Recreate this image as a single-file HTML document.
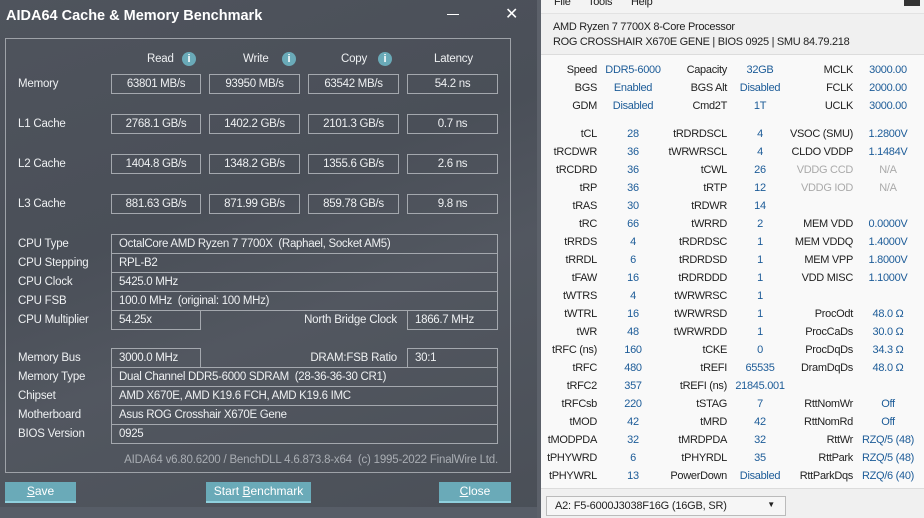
<!DOCTYPE html>
<html><head><meta charset="utf-8"><style>
*{margin:0;padding:0;box-sizing:border-box}
body{width:924px;height:518px;overflow:hidden;position:relative;font-family:"Liberation Sans",sans-serif;background:#4b5059}
.a{position:absolute;white-space:nowrap}
#L{position:absolute;left:0;top:0;width:537px;height:518px;background:linear-gradient(160deg,#4f545d 0%,#4a4f58 40%,#525760 60%,#4a4f57 100%)}
.t{position:absolute;font-size:11.5px;letter-spacing:-0.2px;color:#eef0f2;white-space:nowrap}
.box{position:absolute;border:1px solid #a4a8ae;height:20px;font-size:11.5px;letter-spacing:-0.3px;color:#eef0f2;line-height:18px;white-space:nowrap;overflow:hidden}
.c{text-align:center}
.l{padding-left:7px}
.btn{position:absolute;top:482px;height:21px;background:#6aaab8;border-bottom:2px solid #8fd0de;color:#fff;font-size:12px;text-align:center;line-height:19px;white-space:nowrap}
.ii{position:absolute;width:14px;height:14px;border-radius:50%;background:#6aaab8;color:#fff;font-size:11px;font-weight:bold;text-align:center;line-height:14px}
#R{position:absolute;left:537px;top:0;width:387px;height:518px;background:#f9f9f9;border-left:4px solid #5c616a}
.r{position:absolute;font-size:11px;letter-spacing:-0.3px;color:#222;line-height:14px;white-space:nowrap}
.lb{text-align:right;width:80px}
.v{color:#1d5c98;text-align:center}
.g{color:#aaa}
</style></head><body>
<div id="L">
<div class="a" style="left:6px;top:8px;font-size:14.5px;font-weight:bold;color:#fff">AIDA64 Cache &amp; Memory Benchmark</div>
<div class="a" style="left:447px;top:14px;width:12px;height:1px;background:#fff"></div>
<div class="a" style="left:505px;top:4px;font-size:16px;color:#fff">✕</div>
<div class="a" style="left:5px;top:38px;width:506px;height:435px;border:1px solid #9ea2a8"></div>
<div class="t" style="left:147px;top:53px">Read</div><div class="ii" style="left:182px;top:52px">i</div>
<div class="t" style="left:243px;top:53px">Write</div><div class="ii" style="left:282px;top:52px">i</div>
<div class="t" style="left:341px;top:53px">Copy</div><div class="ii" style="left:378px;top:52px">i</div>
<div class="t" style="left:434px;top:53px">Latency</div>

<div class="t" style="left:18px;top:78px">Memory</div>
<div class="box c" style="left:111px;top:74px;width:90px">63801 MB/s</div>
<div class="box c" style="left:209px;top:74px;width:91px">93950 MB/s</div>
<div class="box c" style="left:308px;top:74px;width:91px">63542 MB/s</div>
<div class="box c" style="left:407px;top:74px;width:91px">54.2 ns</div>
<div class="t" style="left:18px;top:118px">L1 Cache</div>
<div class="box c" style="left:111px;top:114px;width:90px">2768.1 GB/s</div>
<div class="box c" style="left:209px;top:114px;width:91px">1402.2 GB/s</div>
<div class="box c" style="left:308px;top:114px;width:91px">2101.3 GB/s</div>
<div class="box c" style="left:407px;top:114px;width:91px">0.7 ns</div>
<div class="t" style="left:18px;top:158px">L2 Cache</div>
<div class="box c" style="left:111px;top:154px;width:90px">1404.8 GB/s</div>
<div class="box c" style="left:209px;top:154px;width:91px">1348.2 GB/s</div>
<div class="box c" style="left:308px;top:154px;width:91px">1355.6 GB/s</div>
<div class="box c" style="left:407px;top:154px;width:91px">2.6 ns</div>
<div class="t" style="left:18px;top:198px">L3 Cache</div>
<div class="box c" style="left:111px;top:194px;width:90px">881.63 GB/s</div>
<div class="box c" style="left:209px;top:194px;width:91px">871.99 GB/s</div>
<div class="box c" style="left:308px;top:194px;width:91px">859.78 GB/s</div>
<div class="box c" style="left:407px;top:194px;width:91px">9.8 ns</div>

<div class="t" style="left:18px;top:238px">CPU Type</div>
<div class="box l" style="left:111px;top:234px;width:387px">OctalCore AMD Ryzen 7 7700X&nbsp; (Raphael, Socket AM5)</div>
<div class="t" style="left:18px;top:257px">CPU Stepping</div>
<div class="box l" style="left:111px;top:253px;width:387px">RPL-B2</div>
<div class="t" style="left:18px;top:276px">CPU Clock</div>
<div class="box l" style="left:111px;top:272px;width:387px">5425.0 MHz</div>
<div class="t" style="left:18px;top:295px">CPU FSB</div>
<div class="box l" style="left:111px;top:291px;width:387px">100.0 MHz&nbsp; (original: 100 MHz)</div>
<div class="t" style="left:18px;top:314px">CPU Multiplier</div>
<div class="box l" style="left:111px;top:310px;width:90px">54.25x</div>
<div class="t" style="left:270px;top:314px;width:127px;text-align:right">North Bridge Clock</div>
<div class="box l" style="left:407px;top:310px;width:91px">1866.7 MHz</div>

<div class="t" style="left:18px;top:352px">Memory Bus</div>
<div class="box l" style="left:111px;top:348px;width:90px">3000.0 MHz</div>
<div class="t" style="left:270px;top:352px;width:127px;text-align:right">DRAM:FSB Ratio</div>
<div class="box l" style="left:407px;top:348px;width:91px">30:1</div>
<div class="t" style="left:18px;top:371px">Memory Type</div>
<div class="box l" style="left:111px;top:367px;width:387px">Dual Channel DDR5-6000 SDRAM&nbsp; (28-36-36-30 CR1)</div>
<div class="t" style="left:18px;top:390px">Chipset</div>
<div class="box l" style="left:111px;top:386px;width:387px">AMD X670E, AMD K19.6 FCH, AMD K19.6 IMC</div>
<div class="t" style="left:18px;top:409px">Motherboard</div>
<div class="box l" style="left:111px;top:405px;width:387px">Asus ROG Crosshair X670E Gene</div>
<div class="t" style="left:18px;top:428px">BIOS Version</div>
<div class="box l" style="left:111px;top:424px;width:387px">0925</div>
<div class="t" style="left:60px;top:454px;width:438px;text-align:right;color:#a9adb3">AIDA64 v6.80.6200 / BenchDLL 4.6.873.8-x64&nbsp; (c) 1995-2022 FinalWire Ltd.</div>

<div class="btn" style="left:5px;width:71px"><u>S</u>ave</div>
<div class="btn" style="left:206px;width:105px">Start <u>B</u>enchmark</div>
<div class="btn" style="left:439px;width:72px"><u>C</u>lose</div>
<div class="a" style="left:0;top:507px;width:537px;height:11px;background:#575d67"></div>
</div>

<div id="R">
<div class="a" style="left:0;top:0;width:383px;height:14px;background:#f3f3f3;border-bottom:1px solid #e2e2e2"></div>
<div class="r" style="left:13px;top:-5px">File</div>
<div class="r" style="left:47px;top:-5px">Tools</div>
<div class="r" style="left:90px;top:-5px">Help</div>
<div class="a" style="left:363px;top:0;width:16px;height:6px;background:#333"></div>
<div class="a" style="left:0;top:14px;width:383px;height:41px;background:#f0f0f0;border-bottom:1px solid #dcdcdc"></div>
<div class="r" style="left:12px;top:20px">AMD Ryzen 7 7700X 8-Core Processor</div>
<div class="r" style="left:12px;top:35px">ROG CROSSHAIR X670E GENE | BIOS 0925 | SMU 84.79.218</div>
<div class="a" style="left:0;top:488px;width:383px;height:30px;background:#f0f0f0;border-top:1px solid #dcdcdc"></div>
<div class="a" style="left:5px;top:496px;width:240px;height:20px;border:1px solid #bbb;background:#f6f6f6;font-size:11px;letter-spacing:-0.2px;color:#222;padding:3px 8px">A2: F5-6000J3038F16G (16GB, SR)<span style="position:absolute;right:10px;top:3px;font-size:8px">▼</span></div>
<div id="rows"></div>
</div>
<script>
var d=[
["Speed","DDR5-6000","Capacity","32GB","MCLK","3000.00",70],
["BGS","Enabled","BGS Alt","Disabled","FCLK","2000.00",88],
["GDM","Disabled","Cmd2T","1T","UCLK","3000.00",106]];
var t=[["tCL","28","tRDRDSCL","4","VSOC (SMU)","1.2800V"],["tRCDWR","36","tWRWRSCL","4","CLDO VDDP","1.1484V"],["tRCDRD","36","tCWL","26","!VDDG CCD","N/A"],["tRP","36","tRTP","12","!VDDG IOD","N/A"],["tRAS","30","tRDWR","14","",""],["tRC","66","tWRRD","2","MEM VDD","0.0000V"],["tRRDS","4","tRDRDSC","1","MEM VDDQ","1.4000V"],["tRRDL","6","tRDRDSD","1","MEM VPP","1.8000V"],["tFAW","16","tRDRDDD","1","VDD MISC","1.1000V"],["tWTRS","4","tWRWRSC","1","",""],["tWTRL","16","tWRWRSD","1","ProcOdt","48.0 Ω"],["tWR","48","tWRWRDD","1","ProcCaDs","30.0 Ω"],["tRFC (ns)","160","tCKE","0","ProcDqDs","34.3 Ω"],["tRFC","480","tREFI","65535","DramDqDs","48.0 Ω"],["tRFC2","357","tREFI (ns)","21845.001","",""],["tRFCsb","220","tSTAG","7","RttNomWr","Off"],["tMOD","42","tMRD","42","RttNomRd","Off"],["tMODPDA","32","tMRDPDA","32","RttWr","RZQ/5 (48)"],["tPHYWRD","6","tPHYRDL","35","RttPark","RZQ/5 (48)"],["tPHYWRL","13","PowerDown","Disabled","RttParkDqs","RZQ/6 (40)"]];
t.forEach(function(r,i){r.push(134+i*18);d.push(r)});
var h="";var o=537;
d.forEach(function(r){var y=r[6]-7;var g=r[4][0]=="!";var l3=g?r[4].slice(1):r[4];
h+='<div class="r lb" style="left:'+(597-o-80-4)+'px;top:'+y+'px">'+r[0]+'</div>';
h+='<div class="r v" style="left:'+(633-o-40-4)+'px;top:'+y+'px;width:80px">'+r[1]+'</div>';
h+='<div class="r lb" style="left:'+(727-o-80-4)+'px;top:'+y+'px">'+r[2]+'</div>';
h+='<div class="r v" style="left:'+(760-o-40-4)+'px;top:'+y+'px;width:80px">'+r[3]+'</div>';
h+='<div class="r lb'+(g?' g':'')+'" style="left:'+(853-o-100-4)+'px;width:100px;top:'+y+'px">'+l3+'</div>';
h+='<div class="r v'+(g?' g':'')+'" style="left:'+(888-o-40-4)+'px;top:'+y+'px;width:80px">'+r[5]+'</div>';});
document.getElementById("rows").innerHTML=h;
</script>
</body></html>
